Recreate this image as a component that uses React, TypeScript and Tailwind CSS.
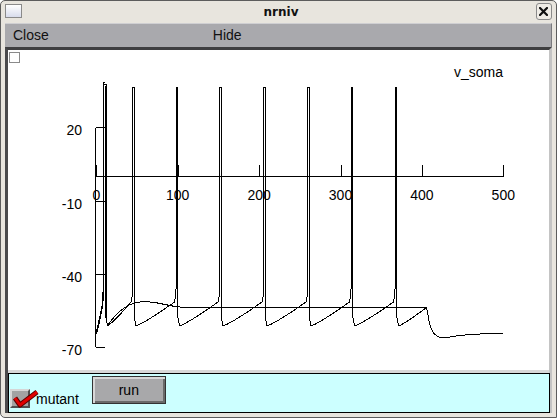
import React from "react";

// page-coordinate geometry of the v_soma plot (canvas origin is at 8,50)
const X0 = 96.3;
const PX_PER_MS = 0.814;
const vy = (v: number) => 127.3 + (20 - v) * 2.44;

const SPIKES = [104.5, 133, 176.5, 220, 264, 308, 351.5, 395.5];
const TOP = 87.5;

const TAIL = "L 426.5 307.5 L 427.5 312 L 429 321 L 431 328 L 434 333.5 L 438 336.5 L 442 338 L 447 337.5 L 456 336 L 470 334.5 L 488 333.6 L 503 333";

function spikingTrace() {
  let d = "M 96 333 L 98 325 L 100 316 L 102 306 L 103.5 298 L 104 82 L 105 82";
  for (let i = 0; i < SPIKES.length; i++) {
    const s = SPIKES[i];
    const top = i === 0 ? 82 : TOP;
    if (i > 0) d += ` L ${s} ${top} L ${s + 1} ${top}`;
    d += ` L ${s + 1.5} 318 L ${s + 3} 326`;
    const start = s + 3;
    const end = i + 1 < SPIKES.length ? SPIKES[i + 1] - 2 : 426.5;
    const endY = i + 1 < SPIKES.length ? 302 : 307.5;
    const n = 10;
    for (let k = 1; k <= n; k++) {
      const t = k / n;
      const x = start + (end - start) * t;
      const y = 326 - (326 - endY) * Math.pow(t, 1.15);
      d += ` L ${x.toFixed(1)} ${y.toFixed(1)}`;
    }
    if (i + 1 < SPIKES.length) {
      const nx = SPIKES[i + 1];
      d += ` L ${nx - 1} 297 L ${nx - 0.4} 288`;
    }
  }
  return d + " " + TAIL;
}

const mutantTrace =
  "M 96.5 334 L 98.5 326 L 100.5 317 L 102.5 307 L 103 299 L 103.5 84 L 106 84 L 106.5 320 L 107.5 326 " +
  "L 110 322 L 115 316 L 120 311 L 128 305.5 L 136 302.5 L 145 301.5 L 155 302.5 L 165 304.5 L 175 306.5 L 185 307.5 L 195 307.5 " +
  TAIL;

function Plot() {
  const xTicks = [0, 100, 200, 300, 400, 500];
  const yTicks = [20, -10, -40, -70];
  return (
    <svg width={541} height={320} viewBox="8 50 541 320" className="block">
      <g stroke="#000" strokeWidth={1} fill="none" shapeRendering="crispEdges">
        <line x1={95.5} y1={176.5} x2={503.5} y2={176.5} />
        {xTicks.map((t) => {
          const x = Math.round(X0 + t * PX_PER_MS) + 0.5;
          return <line key={t} x1={x} y1={165} x2={x} y2={176.5} />;
        })}
        <line x1={95.5} y1={127.5} x2={95.5} y2={346.5} />
        {yTicks.map((v) => {
          const y = Math.round(vy(v)) + 0.5;
          return <line key={v} x1={95.5} y1={y} x2={104.5} y2={y} />;
        })}
      </g>
      <g fill="#000" fontFamily="'Liberation Sans', Arial, sans-serif" fontSize={14}>
        {xTicks.map((t) => (
          <text key={t} x={X0 + t * PX_PER_MS} y={200} textAnchor="middle">
            {t}
          </text>
        ))}
        {yTicks.map((v) => (
          <text key={v} x={82} y={vy(v) + 8} textAnchor="end">
            {v}
          </text>
        ))}
        <text x={503} y={77} textAnchor="end">
          v_soma
        </text>
      </g>
      <g stroke="#000" fill="none" strokeWidth={1} strokeLinejoin="round" shapeRendering="crispEdges">
        <path d={mutantTrace} />
        <path d={spikingTrace()} />
      </g>
    </svg>
  );
}

function CloseGlyph() {
  return (
    <svg width={9} height={9} viewBox="0 0 9 9">
      <path d="M1 1 L8 8 M8 1 L1 8" stroke="#111" strokeWidth={2.2} strokeLinecap="square" />
    </svg>
  );
}

export default function App() {
  return (
    <div className="w-[557px] h-[420px] bg-white" style={{ fontFamily: "'Liberation Sans', Arial, sans-serif" }}>
      <div className="w-[557px] h-[418px] flex flex-col bg-[#e8e5de] border border-[#5c5c5c] rounded-t-[5px] rounded-bl-[5px]">
        {/* title bar */}
        <div className="h-[22px] flex items-center justify-between px-[4px] shrink-0">
          <div className="w-[17px] h-[14px] mt-[-2px] border border-[#8a8a8a] bg-gradient-to-b from-white to-[#d8dcec]" />
          <div className="text-[12px] font-bold text-[#111] ml-[4px]" style={{ fontFamily: "'DejaVu Sans', sans-serif" }}>
            nrniv
          </div>
          <div className="w-[16px] h-[17px] mt-[-2px] border border-[#8a8a8a] rounded-[3px] flex items-center justify-center bg-[#efece6]">
            <CloseGlyph />
          </div>
        </div>
        {/* menubar */}
        <div className="mx-[4px] h-[24px] shrink-0 bg-[#a9a9ad] border-t border-[#cfcfd2] border-r border-r-[#7a7a7e] flex items-center text-[14px] text-[#111]">
          <span className="ml-[8px]">Close</span>
          <span className="ml-[164px]">Hide</span>
        </div>
        {/* canvas + panel */}
        <div className="mx-[4px] flex flex-col border-t-[3px] border-l-[3px] border-t-[#3e3e40] border-l-[#4a4a4c] border-r-[3px] border-r-[#c4c4c4]">
          <div className="relative h-[320px] bg-white">
            <div className="absolute left-[1px] top-[2px] w-[11px] h-[11px] border border-[#8a8a8a] bg-white" />
            <Plot />
          </div>
          <div className="h-[3px] bg-[#d8d8d8]" />
          <div className="h-[40px] bg-[#ccffff] border border-black mr-[-1px] flex items-center">
            <div className="relative w-[20px] h-[19px] ml-[1px] mt-[11px] bg-[#a2a2a2] border-t-2 border-l-2 border-[#d6d6d6] border-r-2 border-b-2 border-r-[#505050] border-b-[#505050]">
              <svg width={26} height={18} viewBox="0 0 26 18" className="absolute left-[1px] top-[-1px]">
                <path d="M2 8 L7 15 L24 2" stroke="#5a0000" strokeWidth={5} fill="none" strokeLinejoin="round" />
                <path d="M2 8 L7 15 L24 2" stroke="#e00000" strokeWidth={3} fill="none" strokeLinejoin="round" />
              </svg>
            </div>
            <span className="text-[14px] text-black ml-[6px] mt-[13px]">mutant</span>
            <button className="ml-[13px] mt-[-6px] w-[74px] h-[28px] bg-[#a8a8aa] border border-[#333] shadow-[inset_2px_2px_0_#d8d8d8,inset_-2px_-2px_0_#6a6a6a] text-[14px] text-black flex items-start justify-center pt-[3px]">
              run
            </button>
          </div>
        </div>
      </div>
    </div>
  );
}
